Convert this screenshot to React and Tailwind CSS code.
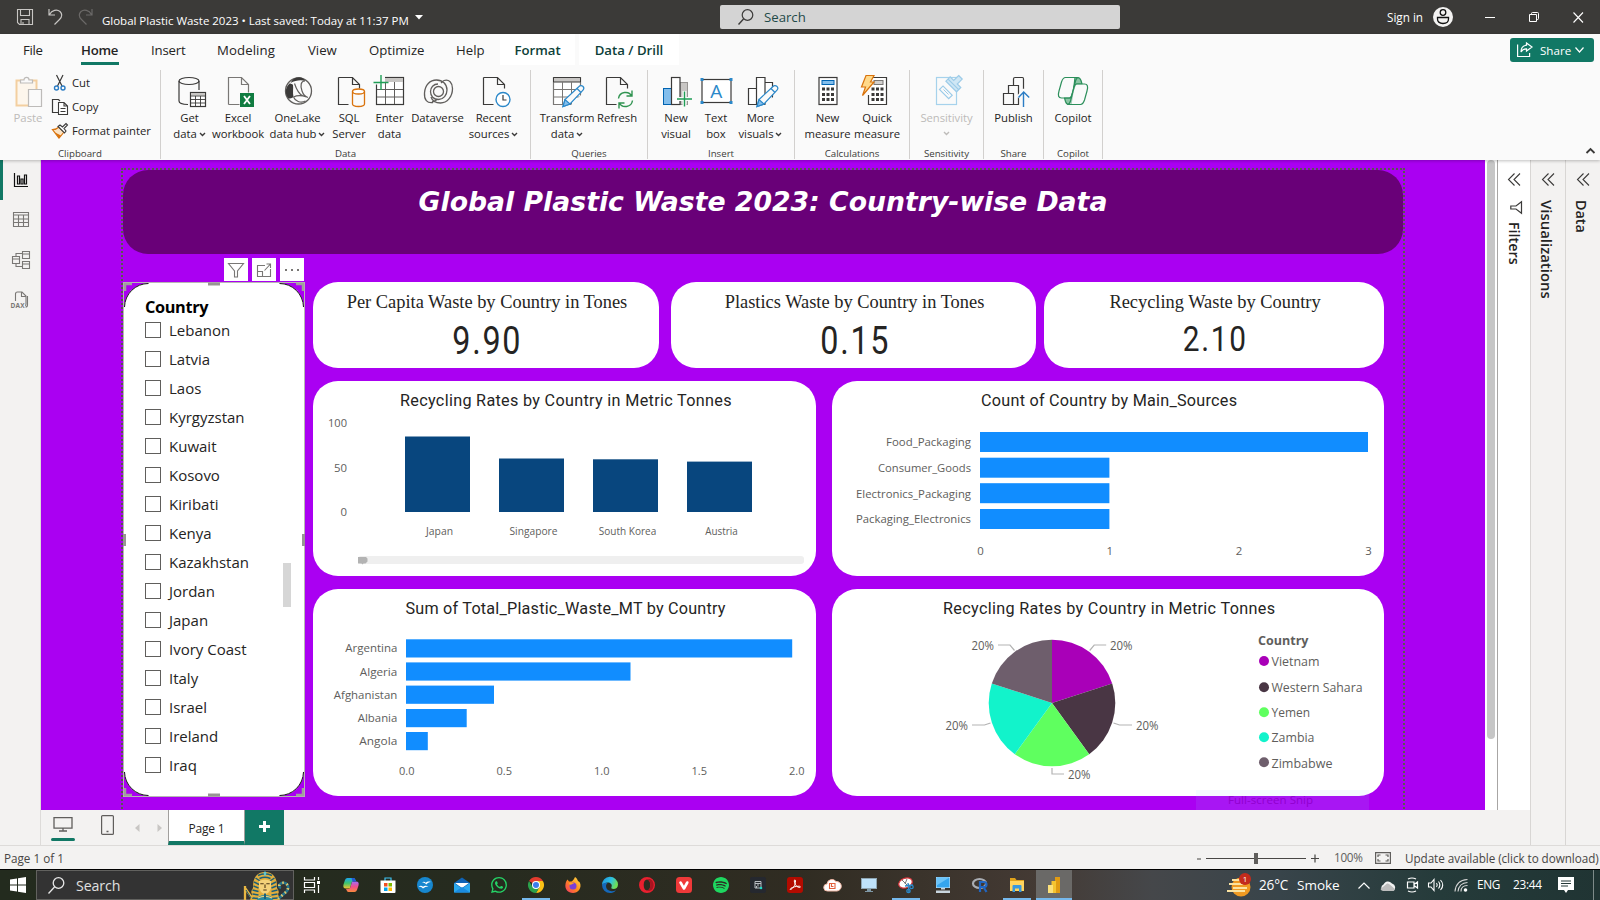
import React from "react";
import { SiWhatsapp, SiSpotify } from "react-icons/si";

const INK = "#3b3a39";

/* ---------- shared glyphs ---------- */

const Svg = ({ s = 32, w, h, children, className = "" }) => (
  <svg width={w || s} height={h || s} viewBox={`0 0 ${w || s} ${h || s}`} fill="none" className={`shrink-0 overflow-visible ${className}`}>
    {children}
  </svg>
);

const Doc = ({ x = 5.5, color = INK }) => (
  <path d={`M${x} 2.5h14l7 7v4M${x + 14} 2.5v7h7M${x} 2.5v27h10`} stroke={color} strokeWidth="1.2" />
);

const Pencil = () => (
  <g stroke="#2b88c9" strokeWidth="1.2">
    <path d="M12 31.5l2-7L28 11.5a2.6 2.6 0 0 1 4 3.6L19 29z" fill="#fafafa" />
    <path d="M12 31.5l2-7 5 4.5z" fill="#83beec" />
    <path d="M26 13.5l4 4" />
  </g>
);

const ribbonIcons = {
  get: (
    <Svg>
      <ellipse cx="15" cy="6" rx="10" ry="3.5" stroke={INK} strokeWidth="1.2" />
      <path d="M5 6v20c0 2 4 3.4 9 3.5M25 6v9" stroke={INK} strokeWidth="1.2" />
      <rect x="16.5" y="17.5" width="15" height="14" fill="#fff" stroke={INK} strokeWidth="1.2" />
      <rect x="17" y="18" width="14" height="2.5" fill="#c8c6c4" />
      <path d="M17 21h14M17 24.5h14M17 28h14M21.5 21v10M26.5 21v10" stroke={INK} strokeWidth="0.9" />
    </Svg>
  ),
  excel: (
    <Svg>
      <path d="M6.5 29.5V2.5h13l7 7v8M19.500 2.5v7h7M6.5 29.500h11" stroke="#797775" strokeWidth="1.2" />
      <rect x="18" y="18" width="14" height="14" fill="#107c41" />
      <path d="M22 21l6 8M28 21l-6 8" stroke="#fff" strokeWidth="1.8" />
    </Svg>
  ),
  onelake: (
    <Svg>
      <circle cx="16.500" cy="16" r="13" stroke="#605e5c" strokeWidth="1.3" fill="#fafafa" />
      <path d="M8.500 8C10.500 3.500 15 1.500 19 2.500c2 .6 3.500 2 4 3.500-4-1.500-10-.5-14.500 2z" fill={INK} />
      <path d="M7.500 8.500c1 0 3 .5 3.500 1.500.500 3-.5 8 .5 12-1.500 1-3.500 1.500-5 1.500C2.500 19 3 13 7.500 8.500z" fill={INK} />
      <path d="M11.500 22c4-2 9-1.500 13 0M12.500 8.500c2 6 4 10.500 8 12M23 6c-4 0-5 4-3 10 1 3 3 5.500 6 6.500M11.500 22c1.500 4 7 6.500 12 4" stroke="#605e5c" strokeWidth="1.200" />
    </Svg>
  ),
  sql: (
    <Svg>
      <Doc x={5.5} />
      <ellipse cx="25.500" cy="16.500" rx="6" ry="2.500" fill="#fff" stroke="#d9730d" strokeWidth="1.300" />
      <path d="M19.500 16.500v12.500c0 3.300 12 3.300 12 0V16.500" stroke="#d9730d" strokeWidth="1.300" />
    </Svg>
  ),
  enter: (
    <Svg>
      <rect x="2.500" y="2.500" width="27" height="27" stroke={INK} strokeWidth="1.200" fill="#fff" />
      <rect x="3" y="3" width="26" height="4" fill="#c8c6c4" />
      <path d="M3 14.500h26M3 22h26M11.500 7v22M20.500 7v22" stroke="#605e5c" strokeWidth="1" />
      <rect x="-1" y="-1" width="12" height="10.500" fill="#fafafa" />
      <path d="M7 0v15M-.5 7.500h15" stroke="#1f9d55" strokeWidth="1.400" />
    </Svg>
  ),
  dataverse: (
    <Svg>
      <g stroke="#605e5c" strokeWidth="1.300">
        <circle cx="16.500" cy="16.500" r="5" />
        <path d="M11 27.500C5 28.500 2 24.500 2.500 18 3 10 8 5 14.500 5c6 0 10.500 4 10.500 10 0 5-3.500 9.500-8.500 9.500-5 0-8-3.500-8-8 0-4 3-7.500 7.500-7.500" />
        <path d="M22 5.500c5-1.500 8.500 2 8.500 8C30.500 22 25 28 18.500 28c-4 0-8-1.500-9.500-6M10 27c2-.5 3.500-1 5-2.500M19 8c1-1 2-2 3-2.500" />
      </g>
    </Svg>
  ),
  recent: (
    <Svg>
      <Doc x={5.5} />
      <circle cx="25" cy="24.500" r="7" fill="#fff" stroke="#2b88c9" strokeWidth="1.400" />
      <path d="M25 20v5h3.500" stroke={INK} strokeWidth="1.200" />
    </Svg>
  ),
  transform: (
    <Svg>
      <path d="M2.500 2.500h27v27h-27z" stroke="#797775" strokeWidth="1.200" fill="#fff" />
      <path d="M2.500 2.500h27v4.500h-27z" fill="#c8c6c4" stroke={INK} />
      <path d="M3 14.500h26M3 22h26M11.500 7v22M20.500 7v22" stroke="#797775" />
      <path d="M19 31l12-12v13z" fill="#fafafa" />
      <Pencil />
    </Svg>
  ),
  refresh: (
    <Svg>
      <Doc x={5.5} />
      <g stroke="#2f9350" strokeWidth="1.400">
        <path d="M17.500 23.500c1-7 10.500-8 13-2.500M31 15.500V21h-5.500M31.500 25.500c-1 7-10.500 8-13 2.500M18 33.500V28h5.500" />
      </g>
    </Svg>
  ),
  newvisual: (
    <Svg>
      <rect x="3.500" y="13.500" width="8" height="16" fill="#83beec" stroke="#0063b1" />
      <rect x="20" y="7.500" width="7.500" height="22" fill="#c8c6c4" stroke="#979593" />
      <rect x="11.500" y="2.500" width="8.500" height="27" fill="#fff" stroke={INK} strokeWidth="1.200" />
      <path d="M24.500 16v15.500M17 24h15" stroke="#fafafa" strokeWidth="4" />
      <path d="M24.500 16.500v15M17 24h15" stroke="#1f9d55" strokeWidth="1.400" />
    </Svg>
  ),
  textbox: (
    <Svg>
      <rect x="2" y="4.500" width="29" height="23" fill="#fff" stroke={INK} strokeWidth="1.200" />
      <path d="M.5 3h3v3h-3zM29.500 3h3v3h-3zM.5 26h3v3h-3zM29.500 26h3v3h-3z" fill="#2b88c9" />
      <text x="16.300" y="22.500" textAnchor="middle" fontFamily="Open Sans" fontSize="19" fill="#2b88c9">A</text>
    </Svg>
  ),
  morevisuals: (
    <Svg>
      <path d="M3.500 13.500h8v16h-8zM11.500 2.500h8.500v27h-8.500zM20 7.500h7.500v22H20z" fill="#fff" stroke={INK} strokeWidth="1.200" />
      <path d="M19 31l12-12v13z" fill="#fafafa" />
      <Pencil />
    </Svg>
  ),
  measure: (
    <Svg>
      <rect x="7" y="2.500" width="18" height="27" fill="#fff" stroke={INK} strokeWidth="1.200" />
      <rect x="10" y="5.500" width="12" height="4" fill="#83beec" stroke="#0063b1" />
      {[12.5, 18, 23].map((y) => [10, 14.5, 19].map((x) => <rect key={`${x}-${y}`} x={x} y={y} width="3" height="3" fill={INK} />))}
    </Svg>
  ),
  quick: (
    <Svg>
      <path d="M12 2.500h13.500v27h-18V20" fill="#fff" stroke={INK} strokeWidth="1.200" />
      <rect x="13" y="5.500" width="9" height="4" fill="#d2d0ce" stroke="#797775" />
      {[12.5, 18, 23].map((y) => [10.5, 15, 19.5].map((x) => <rect key={`${x}-${y}`} x={x} y={y} width="3" height="3" fill={INK} />))}
      <path d="M5 .5h8L9.500 7H13L1.500 20.500l3-8.500H.5z" fill="#ffd98a" stroke="#d9730d" strokeWidth="1.200" />
    </Svg>
  ),
  sensitivity: (
    <Svg>
      <rect x="5.500" y="2.500" width="20" height="27" stroke="#a6d2ec" strokeWidth="1.200" />
      <g transform="rotate(45 22 9)" stroke="#9ccbe8" strokeWidth="1.200">
        <path d="M20-1h5v7h5v6h-15V6h5z" fill="#cfe7f5" />
        <path d="M15 9h15" />
      </g>
      <rect x="12" y="11" width="5" height="13" transform="rotate(-45 14.500 17)" fill="#fafafa" stroke="#9ccbe8" strokeWidth="1.200" />
      <path d="M12.500 14.500l5 5" stroke="#9ccbe8" />
    </Svg>
  ),
  publish: (
    <Svg>
      <path d="M5.500 29.500v-11h10v11zM10.500 18V10.500h10v19H15.500M15.500 10V4q0-1.500 1.500-1.500h7.500q1 0 1 1.500v10" stroke={INK} strokeWidth="1.200" />
      <path d="M20 22.500l5.500-6 6 6M25.500 17v15" stroke="#fafafa" strokeWidth="4" />
      <path d="M20.500 22.500l5.200-5.500 5.500 5.500M25.500 17.500V32" stroke="#2b7cc4" strokeWidth="1.400" />
    </Svg>
  ),
  copilot: (
    <Svg>
      <g stroke="#2c8f5b" strokeWidth="1.200" strokeLinejoin="round">
        <path d="M18 2.500h2.500q2.500 0 3.500 3l1 3.500h-5q-1.500 0-2.500 3l-1 3z" fill="#8cc5a5" />
        <path d="M14 29.500h-2q-2.500 0-3.500-3l-1-3.500h5q1.500 0 2.500-3l1-3z" fill="#8cc5a5" />
        <path d="M20 2.500H8.500Q6 2.500 4.500 7L2 16q-2 7 2.500 7h8q1.500 0 2.500-3.500L18.500 6q1-3.500 3-3.500" />
        <path d="M12 29.500h11.500q2.500 0 4-4.500L30 16q2-7-2.500-7h-8q-1.500 0-2.500 3.500L13.500 26q-1 3.500-3 3.500" fill="#fafafa" fillOpacity=".6" />
      </g>
    </Svg>
  ),
};

const Chev = ({ color = INK, className = "" }) => (
  <Svg w={7} h={5} className={className}>
    <path d="M1 1l2.500 2.500L6 1" stroke={color} strokeWidth="1.400" />
  </Svg>
);

/* ---------- title bar ---------- */

const TitleBar = () => (
  <header className="flex h-[34px] items-center bg-[#3b3a38] text-white">
    <Svg s={16} className="ml-[17px]">
      <path d="M.5.5h15v15h-13l-2-2zM3.500.5v6h9v-6M4 15.500v-5h8v5M6 13v2" stroke="#c8c6c4" strokeWidth="1.100" />
    </Svg>
    <Svg s={16} className="ml-[15px]">
      <path d="M1 0v6h6M1.500 5.500C4 1 9 0 12 2.500c3 3 1.500 6-.5 8L6.500 15.500" stroke="#c8c6c4" strokeWidth="1.200" />
    </Svg>
    <Svg s={16} className="ml-[14px]">
      <path d="M14 0v6H8M13.500 5.500C11 1 6 0 3 2.500c-3 3-1.500 6 .5 8l5 5" stroke="#6b6968" strokeWidth="1.200" />
    </Svg>
    <span className="ml-[8px] w-[306px] pt-[7px] text-[11.500px] font-medium tracking-[-0.02px] whitespace-nowrap">Global Plastic Waste 2023 • Last saved: Today at 11:37 PM</span>
    <Svg w={8} h={5} className="ml-[7px]">
      <path d="M0 0h8L4 4.500z" fill="#fff" />
    </Svg>
    <div className="ml-[297px] flex h-[24px] w-[400px] items-center rounded-[2px] bg-[#d4d4d4]">
      <Svg s={16} className="ml-[18px]">
        <circle cx="9.500" cy="6" r="5.300" stroke="#3b3a39" strokeWidth="1.200" />
        <path d="M5.500 10L.5 15.500" stroke="#3b3a39" strokeWidth="1.400" />
      </Svg>
      <span className="ml-[10px] pt-[1px] text-[13.200px] text-[#1f4a48]">Search</span>
    </div>
    <span className="ml-[267px] w-[36px] pt-[2px] text-[11.700px] font-medium whitespace-nowrap">Sign in</span>
    <Svg s={20} className="ml-[10px]">
      <circle cx="10" cy="10" r="10" fill="#f3f2f1" />
      <circle cx="10" cy="5.500" r="2.800" stroke="#111" strokeWidth="1.300" />
      <path d="M4.500 10.500h11v1.500c0 3-2.500 4.500-5.500 4.500S4.500 15 4.500 12z" stroke="#111" strokeWidth="1.300" />
    </Svg>
    <Svg s={10} className="ml-[32px]">
      <path d="M0 5.500h10" stroke="#fff" />
    </Svg>
    <Svg s={10} className="ml-[34px]">
      <path d="M.5 2.500h7v7h-7zM2.500 2.500v-1q0-1 1-1h5q1 0 1 1v5q0 1-1 1h-1" stroke="#fff" />
    </Svg>
    <Svg s={10} className="ml-[34px]">
      <path d="M.5.500l9.500 10M10 .5L.5 10.500" stroke="#fff" strokeWidth="1.100" />
    </Svg>
  </header>
);

/* ---------- ribbon ---------- */

const Tab = ({ children, className }) => (
  <span className={`flex h-[31px] items-center whitespace-nowrap text-[13.200px] text-[#252423] ${className}`}>{children}</span>
);

const TabRow = () => (
  <nav className="flex h-[31px]">
    <Tab className="ml-[23px] w-[58px] pt-[2px] tracking-[-0.3px]">File</Tab>
    <Tab className="mr-[32px] w-[38px] border-b-[3px] border-[#117865] pt-[5px] font-semibold tracking-[-0.250px]">Home</Tab>
    <Tab className="w-[66px] pt-[2px] tracking-[-0.150px]">Insert</Tab>
    <Tab className="w-[91px] pt-[2px] tracking-[0.1px]">Modeling</Tab>
    <Tab className="w-[61px] pt-[2px]">View</Tab>
    <Tab className="w-[87px] pt-[2px]">Optimize</Tab>
    <Tab className="w-[44px] pt-[2px]">Help</Tab>
    <Tab className="w-[75px] justify-center bg-white pt-[2px] font-semibold text-[#0d4038]!">Format</Tab>
    <Tab className="ml-[4px] w-[100px] justify-center bg-white pt-[2px] font-semibold text-[#0d4038]!">Data / Drill</Tab>
    <button className="mt-[4px] ml-[831px] flex h-[24px] w-[84px] items-center rounded-[3px] bg-[#117865] text-[11.600px] font-medium text-white">
      <Svg s={16} className="ml-[7px]">
        <path d="M.6 2.500v12h12v-3.500M9.500 1l5.500 4-5.500 4V6.800C6.500 6.800 5 8 4 10c0-4 2-6.500 5.500-6.800z" stroke="#fff" strokeWidth="1.200" />
      </Svg>
      <span className="ml-[7px] w-[31px] pt-[2px]">Share</span>
      <Svg w={9} h={6} className="ml-[4px]">
        <path d="M.5.5l4 4.500 4-4.500" stroke="#fff" strokeWidth="1.200" />
      </Svg>
    </button>
  </nav>
);

const Tool = ({ icon, lines, w, chev, dim }) => (
  <div className={`flex flex-col items-center text-[11.300px] leading-[16px] tracking-[-0.05px] whitespace-nowrap ${w} ${dim ? "text-[#bdbbb9]" : "text-[#252423]"}`}>
    {ribbonIcons[icon]}
    <span className="mt-[3px]">{lines[0]}</span>
    {(lines[1] || chev) && (
      <span className="-mt-[0.500px] flex items-center gap-[2px]">
        {lines[1] && <span>{lines[1]}</span>}
        {chev && <Chev color={dim ? "#bdbbb9" : INK} className={lines[1] ? "mt-[2px]" : "mt-[5px]"} />}
      </span>
    )}
  </div>
);

const Group = ({ label, w, children }) => (
  <section className={`flex h-[89px] flex-col justify-between border-r border-[#d2d0ce] ${w}`}>
    <div className="flex pt-[5px]">{children}</div>
    <div className="-mb-[2px] text-center text-[9.700px] leading-[14px] text-[#3b3a39]">{label}</div>
  </section>
);

const Ribbon = () => (
  <div className="relative z-10 h-[126px] bg-[#fafafa] shadow-[0_1px_3px_rgba(0,0,0,0.25)]">
    <TabRow />
    <div className="flex pt-[5px]">
      <Group label="Clipboard" w="w-[161px]">
        <div className="flex w-[50px] flex-col items-center pl-[6px] text-[11.400px] leading-[16px] text-[#bdbbb9]">
          <Svg className="ml-[2px]">
            <path d="M3.500 5.500h20v25h-20z" stroke="#f3cfa0" strokeWidth="2" fill="#fdf6ec" />
            <path d="M7.500 8V5h3.500c0-3.500 5-3.500 5 0h3.500v3z" fill="#fafafa" stroke="#bdbbb9" strokeWidth="1.200" />
            <path d="M15.500 14.500h13v17h-13z" fill="#fafafa" stroke="#bdbbb9" strokeWidth="1.200" />
          </Svg>
          <span className="mt-[3px]">Paste</span>
        </div>
        <div className="flex flex-col gap-[8px] text-[11.300px] leading-[16px] text-[#252423]">
          <div className="flex h-[16px] items-center gap-[5px]">
            <Svg s={16} className="ml-[2px]">
              <path d="M4.500 0l5.500 11M11 0L5.500 11" stroke={INK} strokeWidth="1.200" />
              <circle cx="4.500" cy="13" r="2" stroke="#2b7cc4" strokeWidth="1.400" />
              <circle cx="11" cy="13" r="2" stroke="#2b7cc4" strokeWidth="1.400" />
            </Svg>
            <span className="-ml-[1px]">Cut</span>
          </div>
          <div className="flex h-[16px] items-center gap-[4px]">
            <Svg s={16} className="ml-[2px]">
              <path d="M6 13.500H.5V.5h6l1.500 1.500" stroke={INK} strokeWidth="1.200" />
              <path d="M6.500 3.500h5.500l3.500 3.500v8.500h-9zM12 3.500V7h3.500M8.500 9.500h5M8.500 12.500h5" fill="#fff" stroke={INK} strokeWidth="1.100" />
            </Svg>
            <span>Copy</span>
          </div>
          <div className="flex h-[16px] items-center gap-[4px]">
            <Svg s={16} className="ml-[2px]">
              <path d="M.5 6.500c3 0 5-1 6.500-2.500L12 9c-1.500 2-3 4-5 6z" fill="#fbe3c4" stroke="#d9730d" strokeWidth="1.200" />
              <path d="M3 9.500l6 3-2 2.500z" fill="#d9730d" />
              <path d="M6 3.500l2-1.500 2.500 2L14 .5l1.500 1.500L12 5.500l2 2.500-1.500 2z" fill="#fff" stroke={INK} strokeWidth="1.100" />
            </Svg>
            <span className="whitespace-nowrap">Format painter</span>
          </div>
        </div>
      </Group>
      <Group label="Data" w="w-[370px]">
        <div className="w-[5px]" />
        <Tool icon="get" lines={["Get", "data"]} chev w="w-[47px]" />
        <Tool icon="excel" lines={["Excel", "workbook"]} w="w-[50px]" />
        <Tool icon="onelake" lines={["OneLake", "data hub"]} chev w="w-[69px]" />
        <Tool icon="sql" lines={["SQL", "Server"]} w="w-[34px]" />
        <Tool icon="enter" lines={["Enter", "data"]} w="w-[47px]" />
        <Tool icon="dataverse" lines={["Dataverse"]} w="w-[49px]" />
        <Tool icon="recent" lines={["Recent", "sources"]} chev w="w-[63px]" />
      </Group>
      <Group label="Queries" w="w-[117px]">
        <div className="w-[9px]" />
        <Tool icon="transform" lines={["Transform", "data"]} chev w="w-[54px]" />
        <Tool icon="refresh" lines={["Refresh"]} w="w-[46px]" />
      </Group>
      <Group label="Insert" w="w-[147px]">
        <div className="w-[8px]" />
        <Tool icon="newvisual" lines={["New", "visual"]} w="w-[40px]" />
        <Tool icon="textbox" lines={["Text", "box"]} w="w-[40px]" />
        <Tool icon="morevisuals" lines={["More", "visuals"]} chev w="w-[49px]" />
      </Group>
      <Group label="Calculations" w="w-[115px]">
        <div className="w-[8px]" />
        <Tool icon="measure" lines={["New", "measure"]} w="w-[49px]" />
        <Tool icon="quick" lines={["Quick", "measure"]} w="w-[50px]" />
      </Group>
      <Group label="Sensitivity" w="w-[74px]">
        <Tool icon="sensitivity" lines={["Sensitivity"]} chev dim w="w-[73px]" />
      </Group>
      <Group label="Share" w="w-[60px]">
        <Tool icon="publish" lines={["Publish"]} w="w-[59px]" />
      </Group>
      <Group label="Copilot" w="w-[59px]">
        <Tool icon="copilot" lines={["Copilot"]} w="w-[58px]" />
      </Group>
      <Svg w={9} h={5} className="mt-[78px] ml-[483px]">
        <path d="M.5 5l4-4 4 4" stroke={INK} strokeWidth="1.800" />
      </Svg>
    </div>
  </div>
);

/* ---------- left navigation ---------- */

const LeftNav = () => (
  <nav className="flex h-[685px] w-[41px] flex-col border-r border-[#dddbd9] bg-[#f3f2f1]">
    <div className="flex h-[40px] w-[41px] items-center border-l-[3px] border-[#117865] pl-[11px]">
      <Svg s={14}>
        <path d="M.5 0v13.500H14M3.500 3h2v8h-2zM7 6h2v5H7zM10.500 2h2v9h-2z" stroke="#111" strokeWidth="1.200" />
      </Svg>
    </div>
    <Svg w={16} h={15} className="mt-[12px] ml-[13px]">
      <path d="M.5.5h15v14H.5zM.5 3h15M.500 7h15M.5 10.500h15M5.500 3v11.500M10.500 3v11.500" stroke="#797775" strokeWidth="1.100" />
    </Svg>
    <Svg s={18} className="mt-[24px] ml-[12px]">
      <path d="M.5 5.500h7v7h-7zM.5 8h7M10.500.5h7v7h-7zM10.500 3h7M10.500 10.500h7v7h-7zM10.500 13h7M4 5.500V2.500h6.500M4 12.500v3h6.500" stroke="#797775" strokeWidth="1.100" />
    </Svg>
    <Svg w={18} h={18} className="mt-[22px] ml-[11px]">
      <path d="M4.500 10V3q0-2 2-2H11l4 4v8q0 1.500-1 1.500M10.500 1v4.500H15M16.500 5v9q0 2-2 2" stroke="#797775" strokeWidth="1.100" />
      <text x="-.5" y="16.500" fontFamily="Open Sans" fontWeight="700" fontSize="6.500" fill="#797775" textLength="14">DAX</text>
    </Svg>
  </nav>
);

/* ---------- report visuals ---------- */

const Label = ({ x, y, w, anchor = "start", size = 11.4, fill = "#605e5c", weight = 400, font = "Open Sans, sans-serif", children }) => (
  <text x={x} y={y} fontSize={size} fill={fill} fontWeight={weight} fontFamily={font} textAnchor={anchor} textLength={w} lengthAdjust="spacingAndGlyphs">
    {children}
  </text>
);

/* Titles spread their letters with spacing only, which keeps the narrow glyphs. */
const ChartTitle = ({ x, y, w, children }) => (
  <text x={x} y={y} textLength={w} lengthAdjust="spacing" fontSize="16.2" fill="#252423" fontFamily="Roboto, sans-serif">{children}</text>
);

/* Each chart keeps the report page's own coordinates through its viewBox. */
const Chart = ({ x, y, w, h, children }) => (
  <svg width={w} height={h} viewBox={`${x} ${y} ${w} ${h}`} className="block shrink-0 rounded-[25px] bg-white">
    {children}
  </svg>
);

const columns = [
  { n: "Japan", x: 405, top: 436.5, lw: 27 },
  { n: "Singapore", x: 499, top: 458.5, lw: 48 },
  { n: "South Korea", x: 593, top: 459.3, lw: 57.5 },
  { n: "Austria", x: 687, top: 461.6, lw: 32.5 },
];

const RecyclingColumns = () => (
  <Chart x={313} y={381} w={503} h={195}>
    <ChartTitle x={400} y={406} w={331.5}>Recycling Rates by Country in Metric Tonnes</ChartTitle>
    <Label x={347} y={426.5} anchor="end" w={19}>100</Label>
    <Label x={347} y={471.5} anchor="end" w={13}>50</Label>
    <Label x={347} y={515.5} anchor="end" w={6.5}>0</Label>
    {columns.map((c) => (
      <g key={c.n}>
        <rect x={c.x} y={c.top} width="65" height={512 - c.top} fill="#08467e" />
        <Label x={c.x + 34.5} y={535} anchor="middle" w={c.lw} size={10.8}>{c.n}</Label>
      </g>
    ))}
    <rect x="358" y="556" width="446" height="8" rx="3" fill="#efefef" />
    <path d="M358 557h8l1.500 1.500v3l-2 2h-2l-1 1-1-1h-3.500z" fill="#b3b3b3" />
  </Chart>
);

const sources = [
  ["Food_Packaging", 432, 1368, 446.3, 85],
  ["Consumer_Goods", 457.7, 1109.4, 472, 93],
  ["Electronics_Packaging", 483.2, 1109.4, 498, 115],
  ["Packaging_Electronics", 509, 1109.4, 523.3, 115],
];

const MainSources = () => (
  <Chart x={832} y={381} w={552} h={195}>
    <ChartTitle x={981} y={406} w={256}>Count of Country by Main_Sources</ChartTitle>
    {sources.map(([n, y, end, base, lw]) => (
      <g key={n}>
        <Label x={971} y={base} anchor="end" w={lw} size={11.6}>{n}</Label>
        <rect x="980" y={y} width={end - 980} height="20" fill="#118dff" />
      </g>
    ))}
    {[0, 1, 2, 3].map((v) => (
      <Label key={v} x={980.5 + v * 129.3} y={555} anchor="middle">{v}</Label>
    ))}
  </Chart>
);

const totals = [
  ["Argentina", 639.3, 792.2, 652, 52],
  ["Algeria", 662.4, 630.5, 676, 37.5],
  ["Afghanistan", 685.6, 494, 699, 63.5],
  ["Albania", 709, 466.7, 722, 39.5],
  ["Angola", 732, 427.8, 745, 38],
];

const TotalWaste = () => (
  <Chart x={313} y={589} w={503} h={207}>
    <ChartTitle x={405.5} y={614} w={320}>Sum of Total_Plastic_Waste_MT by Country</ChartTitle>
    {totals.map(([n, y, end, base, lw]) => (
      <g key={n}>
        <Label x={397.3} y={base} anchor="end" w={lw} size={11.6}>{n}</Label>
        <rect x="406" y={y} width={end - 406} height="18.200" fill="#118dff" />
      </g>
    ))}
    {["0.0", "0.5", "1.0", "1.5", "2.0"].map((v, i) => (
      <Label key={v} x={406.7 + i * 97.5} y={774.5} anchor="middle" w={15.5}>{v}</Label>
    ))}
  </Chart>
);

const slices = [
  ["Vietnam", "#a900b8", 48, 661, 666],
  ["Western Sahara", "#493644", 91, 687.3, 692],
  ["Yemen", "#5fff5f", 38.5, 712.3, 717],
  ["Zambia", "#12f3cb", 43, 737.3, 742],
  ["Zimbabwe", "#6e5e6c", 61, 762.3, 768],
];

const slicePath = (i) => {
  const pt = (k) => {
    const a = (k * 72 * Math.PI) / 180;
    return `${(1052 + 63.3 * Math.sin(a)).toFixed(2)} ${(703 - 63.3 * Math.cos(a)).toFixed(2)}`;
  };
  return `M1052 703L${pt(i)}A63.3 63.3 0 0 1 ${pt(i + 1)}Z`;
};

const RecyclingPie = () => (
  <Chart x={832} y={589} w={552} h={207}>
    <ChartTitle x={943} y={614} w={332}>Recycling Rates by Country in Metric Tonnes</ChartTitle>
    {slices.map(([n, c], i) => (
      <path key={n} d={slicePath(i)} fill={c} />
    ))}
    <path
      d="M1089.700 650.500l4.500-5.500h12M1113.500 723l6 2h12.500M1052 768v6h12M990.500 723l-6 2H972M1014.500 650.500l-4.500-5.500h-12"
      fill="none"
      stroke="#b3b3b3"
      strokeWidth="1.200"
    />
    {[[1110, 650], [1136, 730], [1068, 779], [945.5, 730], [971.5, 650]].map(([x, y]) => (
      <Label key={`${x}`} x={x} y={y} w={22.5} size={11.8}>20%</Label>
    ))}
    <Label x={1258} y={645} w={50.5} size={12.8} weight={700}>Country</Label>
    {slices.map(([n, c, lw, cy, base]) => (
      <g key={n}>
        <circle cx="1264" cy={cy} r="5" fill={c} />
        <Label x={1271.5} y={base} w={lw} size={13}>{n}</Label>
      </g>
    ))}
  </Chart>
);

const Kpi = ({ title, value, w, valueCls }) => (
  <div className={`flex h-[86px] shrink-0 flex-col items-center rounded-[25px] bg-white text-[#252423] ${w}`}>
    <div className="mt-[8px] pl-[2px] font-[Liberation_Serif,serif] text-[18.400px] leading-[24px] whitespace-nowrap">{title}</div>
    <div className={`scale-x-[0.84] font-[Roboto,sans-serif] leading-[44px] ${valueCls}`}>{value}</div>
  </div>
);

const countries = ["Lebanon", "Latvia", "Laos", "Kyrgyzstan", "Kuwait", "Kosovo", "Kiribati", "Kenya", "Kazakhstan", "Jordan", "Japan", "Ivory Coast", "Italy", "Israel", "Ireland", "Iraq"];

const Slicer = () => (
  <div className="relative h-[515px] w-[182px] shrink-0 border border-[#b8b6b4]">
    <div className="h-full rounded-[25px] bg-white pt-[14px] pl-[21px]">
      <div className="h-[24px] text-[16.300px] leading-[20px] font-bold tracking-[-0.350px] text-black">Country</div>
      <div className="flex flex-col">
        {countries.map((c) => (
          <label key={c} className="flex h-[29px] items-start">
            <span className="mt-[1px] h-[16px] w-[16px] border border-[#605e5c] bg-white" />
            <span className="ml-[8px] text-[15px] leading-[18px] text-[#252423]">{c}</span>
          </label>
        ))}
      </div>
    </div>
    {/* rounded outline and resize handles over the frame */}
    <svg width="182" height="515" viewBox="0 0 182 515" fill="none" className="pointer-events-none absolute -top-px -left-px">
      <path d="M1.500 25A24 24 0 0 1 25.500 1.500M156.500 1.500A24 24 0 0 1 180.500 25M1.500 490A24 24 0 0 0 25.500 513.500M156.500 513.500A24 24 0 0 0 180.500 490" stroke="#111" />
      <path d="M2 9V2h7M173 2h7v7M2 506v7h7M173 513h7v-7" stroke="#a19f9d" strokeWidth="2.500" />
      <path d="M85 2h12M85 513h12M1.500 252v12M180.500 252v12" stroke="#979593" strokeWidth="3" />
      <rect x="160" y="281" width="8" height="44" fill="#d6d6d6" />
    </svg>
  </div>
);

const VisualToolbar = () => (
  <div className="flex h-[28px] gap-[4px] pt-[4px] pl-[101px]">
    <div className="flex h-[23px] w-[24px] items-center justify-center bg-white">
      <Svg s={16}><path d="M.5 1.500h15L9.500 9v6h-3V9z" stroke="#797775" strokeWidth="1.100" /></Svg>
    </div>
    <div className="flex h-[23px] w-[24px] items-center justify-center bg-white">
      <Svg s={16}><path d="M9 3.500H1.500v11h13V7M1.500 9.500h5v5M8.500 8.500l6-6.500M10.500 2h4v4" stroke="#797775" strokeWidth="1.100" /></Svg>
    </div>
    <div className="flex h-[23px] w-[24px] items-center justify-center bg-white">
      <Svg s={16}><path d="M1 7h2v2H1zM7 7h2v2H7zM13 7h2v2h-2z" fill="#797775" /></Svg>
    </div>
  </div>
);

const ReportCanvas = () => (
  <div className="relative h-[650px] w-[1444px] shrink-0 overflow-hidden bg-[#aa00f2] pt-[8px] pl-[80px]">
    <div className="h-[720px] w-[1284px] border-2 border-dotted border-[#585a4e]">
      <div className="flex h-[84px] justify-center rounded-[25px] bg-[#690078] pt-[16px]">
        <h1 className="font-[DejaVu_Sans,sans-serif] text-[26.700px] leading-[32px] font-bold whitespace-nowrap text-white italic">Global Plastic Waste 2023: Country-wise Data</h1>
      </div>
      <VisualToolbar />
      <div className="flex gap-[8px]">
        <Slicer />
        <div className="flex flex-col gap-[13px]">
          <div className="flex">
            <Kpi title="Per Capita Waste by Country in Tones" value="9.90" w="w-[346px]" valueCls="mt-[5px] text-[38.500px] tracking-[2px] pl-[4px]" />
            <div className="w-[12px]" />
            <Kpi title="Plastics Waste by Country in Tones" value="0.15" w="w-[365px]" valueCls="mt-[5px] text-[38.500px] tracking-[2px] pl-[4px]" />
            <div className="w-[8px]" />
            <Kpi title="Recycling Waste by Country" value="2.10" w="w-[340px]" valueCls="mt-[3px] text-[35.500px] tracking-[2px] pl-[4px]" />
          </div>
          <div className="flex gap-[16px]"><RecyclingColumns /><MainSources /></div>
          <div className="flex gap-[16px]"><TotalWaste /><RecyclingPie /></div>
        </div>
      </div>
    </div>
    <div className="absolute right-[116px] bottom-0 h-[20px] w-[173px] bg-[#a0d8ff]/10 pt-[2px] pl-[32px] text-[11.600px] leading-[16px] whitespace-nowrap text-[#9100cf]">Full-screen Snip</div>
  </div>
);

const Collapse = () => (
  <Svg w={13} h={13}>
    <path d="M6.500.5l-6 6 6 6M12 .5l-6 6 6 6" stroke={INK} strokeWidth="1.100" />
  </Svg>
);

const PageTabs = () => (
  <div className="flex h-[35px] bg-[#f3f2f1]">
    <div className="ml-[10px] flex w-[24px] flex-col items-center">
      <Svg w={20} h={15} className="mt-[7px] -ml-[1px]">
        <path d="M1 .6h18v10.500H1zM10 11v3M6 14h8" stroke="#605e5c" strokeWidth="1.300" />
      </Svg>
      <div className="mt-[6px] h-[3px] w-[24px] rounded bg-[#117865]" />
    </div>
    <Svg w={13} h={20} className="mt-[5px] ml-[26px]">
      <rect x=".6" y=".6" width="11.800" height="18.800" rx="1" stroke="#605e5c" strokeWidth="1.200" />
      <path d="M5.500 16.500h2" stroke="#605e5c" strokeWidth="1.500" />
    </Svg>
    <Svg w={5} h={8} className="mt-[14px] ml-[21px]"><path d="M4.500 0v8L0 4z" fill="#c8c6c4" /></Svg>
    <Svg w={5} h={8} className="mt-[14px] ml-[17px]"><path d="M.5 0v8L5 4z" fill="#c8c6c4" /></Svg>
    <div className="ml-[6px] w-[77px] border-x border-b-[4px] border-x-[#a19f9d] border-b-[#117865] bg-white pt-[10px] text-center text-[12px] leading-[18px] font-medium tracking-[-0.2px] text-[#252423]">Page 1</div>
    <div className="flex w-[39px] items-center justify-center bg-[#117865]">
      <Svg s={11} className="-mt-[2px]"><path d="M5.500 0v11M0 5.500h11" stroke="#fff" strokeWidth="3" /></Svg>
    </div>
  </div>
);

const SidePanes = () => (
  <>
    <div className="flex w-[35px] flex-col items-center border-l border-[#d8d6d4] bg-[#f3f2f1] pt-[13px]">
      <Collapse />
      <span className="mt-[14px] mr-[2px] text-[14.800px] leading-[18px] font-semibold tracking-[0.050px] text-[#252423] [writing-mode:vertical-rl]">Visualizations</span>
    </div>
    <div className="flex w-[35px] flex-col items-center border-l border-[#d8d6d4] bg-[#f3f2f1] pt-[13px]">
      <Collapse />
      <span className="mt-[14px] mr-[4px] text-[14.300px] leading-[18px] font-semibold text-[#252423] [writing-mode:vertical-rl]">Data</span>
    </div>
  </>
);

/* ---------- status bar ---------- */

const StatusBar = () => (
  <div className="flex h-[24px] items-center border-t border-[#dddbd9] bg-[#f3f2f1] text-[11.700px] whitespace-nowrap text-[#484644]">
    <span className="ml-[4px] w-[1192px] pt-[3px]">Page 1 of 1</span>
    <Svg w={124} h={12}>
      <path d="M1 7h4M10 6.500h100M115 6.500h8M119 2.500v8" stroke="#484644" strokeWidth="1.200" />
      <rect x="58" y="1" width="4" height="11" fill="#605e5c" />
    </Svg>
    <span className="ml-[14px] w-[41px] tracking-[-0.3px] text-[#605e5c]">100%</span>
    <Svg w={16} h={12} className="mt-[1px]">
      <path d="M.6.6h14.800v10.800H.6z" stroke="#605e5c" strokeWidth="1.200" />
      <path d="M3 5V3h2.500M10.500 3H13v2M13 7v2h-2.500M5.500 9H3V7" stroke="#605e5c" strokeWidth="1.200" />
    </Svg>
    <span className="ml-[14px] pt-[3px] tracking-[-0.050px]">Update available (click to download)</span>
  </div>
);

/* ---------- taskbar ---------- */

const Slot = ({ children, open, active }) => (
  <div className="flex h-[30px] w-[37px] justify-center">
    <div className={`flex h-[30px] flex-col items-center ${active ? "w-[36px] bg-[#6a6967]" : "w-[28px]"}`}>
      <div className="flex h-[28px] items-center pt-[2px]">{children}</div>
      {(open || active) && <div className="h-[2px] w-full bg-[#76b9ed]" />}
    </div>
  </div>
);

const Pharaoh = () => (
  <Svg w={48} h={29}>
    <path d="M7 29l2-6q-2-2 1-6 0-9 3-12Q16 1 22 1t9 4q3 3 3 12 3 4 1 6l2 6z" fill="#e2ae3c" />
    <path d="M12.500 7l4.500 3M11 11l5 2.500M10.500 15l5 2M9.500 19l6 1.500M9.500 23l6 1M9 27l7 .5M31.500 7L27 10M33 11l-5 2.500M33.500 15l-5 2M34.500 19l-6 1.500M34.500 23l-6 1M35 27l-7 .5M15 4.500q7-3.500 14 0M16.500 7.500q5.500-2.500 11 0" stroke="#1c5f78" strokeWidth="1.500" />
    <path d="M16 10q6-3 12 0v7q-1.500 5.500-6 6-4.500-.5-6-6z" fill="#f4d27a" />
    <path d="M17.300 12.800h3.400M23.300 12.800h3.400M20.300 19h3.400M22 13.500v3.500" stroke="#4a3414" strokeWidth="1.100" />
    <path d="M14 29q1-5 8-5t8 5z" fill="#2b8ba0" />
    <path d="M15 27q7-3.500 14 0" stroke="#f4d27a" strokeWidth="1.200" />
    <path d="M21 22.500h2V28h-2z" fill="#1c5f78" />
    <path d="M22 0l1.500 2-1 3h-1l-1-3z" fill="#5cc3d2" />
    <path d="M2 15v14M2 17l7 10" stroke="#e8b743" strokeWidth="2.300" />
    <path d="M3 19l5 8" stroke="#1c5f78" strokeWidth="1" />
    <path d="M35 28l8-7c5-5 0-12-6-8q-2 3 1 4" stroke="#25748c" strokeWidth="2.600" />
    <path d="M35 28l8-7c5-5 0-12-6-8q-2 3 1 4" stroke="#e8c766" strokeWidth="2.600" strokeDasharray="1.500 3" />
  </Svg>
);

const CopilotLogo = () => (
  <Svg s={16}>
    <defs>
      <linearGradient id="cpA" x1="0" y1="0" x2="0" y2="1"><stop stopColor="#1ba7f0" /><stop offset=".5" stopColor="#3fc46a" /><stop offset="1" stopColor="#f7c331" /></linearGradient>
      <linearGradient id="cpB" x1="0" y1="0" x2="0" y2="1"><stop stopColor="#a46bf5" /><stop offset=".5" stopColor="#f04f8b" /><stop offset="1" stopColor="#f98b3c" /></linearGradient>
    </defs>
    <path d="M4.500 1h6q1.500 0 2 2L13 4h-2.500q-1.500 0-2 2L7 11.500H3Q-.5 11.500.5 7.500L2 3q.7-2 2.500-2z" fill="url(#cpA)" />
    <path d="M11.500 15h-6q-1.500 0-2-2L3 12h2.500q1.500 0 2-2L9 4.500h4q3.500 0 2.500 4L14 13q-.7 2-2.500 2z" fill="url(#cpB)" />
    <path d="M8.500 1h2q1.500 0 2 2l.5 1.500H9.500z" fill="#2459d6" />
  </Svg>
);

const ChromeLogo = () => (
  <Svg s={16}>
    <path d="M8 8L1.070 4A8 8 0 0 1 14.930 4H8z" fill="#e33b2e" />
    <path d="M8 8l6.930-4A8 8 0 0 1 8 16l3.500-6z" fill="#fbc116" />
    <path d="M8 8v8A8 8 0 0 1 1.070 4l3.500 6z" fill="#2ba24c" />
    <path d="M8 4h6.930L11.500 10z" fill="#fbc116" />
    <path d="M8 16l3.500-6H8z" fill="#2ba24c" />
    <circle cx="8" cy="8" r="4" fill="#fff" />
    <circle cx="8" cy="8" r="3" fill="#3b7ded" />
  </Svg>
);

const FirefoxLogo = () => (
  <Svg s={16}>
    <defs>
      <linearGradient id="ffx" x1="1" y1="0" x2="0" y2="1"><stop stopColor="#ffe14a" /><stop offset=".5" stopColor="#ff8a1d" /><stop offset="1" stopColor="#f5316b" /></linearGradient>
    </defs>
    <path d="M10 0c1.500 1 2.500 2.500 3 4 1 .5 1.500 1 2 2 2 5-2 10-7 10S-.5 12 .5 7C.8 5 1.500 4 2.500 2.500L4 4.500h2.500C8 3.500 9 2 10 0z" fill="url(#ffx)" />
    <circle cx="8" cy="9" r="3.500" fill="#7a3fd6" />
    <path d="M4 6c2-1 4-.5 5 .5-1.500 0-2 1-3.500 1.200C4.500 8 4 7 4 6z" fill="#ffa51f" />
  </Svg>
);

const EdgeLogo = () => (
  <Svg s={16}>
    <defs>
      <linearGradient id="edg" x1="0" y1="0" x2="1" y2=".4"><stop stopColor="#1a8fe0" /><stop offset=".6" stopColor="#2fc2df" /><stop offset="1" stopColor="#6ede54" /></linearGradient>
    </defs>
    <path d="M0 8a8 8 0 0 1 16-.5c0 3-2 4.500-4.500 4.500-2 0-2.500-1-2-2C10.500 8 9 5.500 6 5.500 3 5.500 1 7 0 8z" fill="url(#edg)" />
    <path d="M0 8c1-1.500 3-2.500 5.500-2-2 1.500-2 5 .5 7 2 1.500 5 1.500 8 .2C12 15.500 10 16 8 16a8 8 0 0 1-8-8z" fill="#1668b8" />
  </Svg>
);

const Taskbar = () => (
  <footer className="flex h-[31px] border-t border-black bg-[linear-gradient(90deg,#232b1e_0%,#262b1f_30%,#302c22_50%,#443a34_65%,#45474a_72%,#38444a_80%,#253b3a_90%,#203433_100%)] text-white">
    <Svg s={16} className="mt-[7px] ml-[10px]">
      <path d="M0 2.500l7-1v6H0zM8 1.300L16 0v7.500H8zM0 8.500h7v6l-7-1zM8 8.500h8V16l-8-1.300z" fill="#fff" />
    </Svg>
    <div className="ml-[10px] flex h-[30px] w-[258px] items-center border border-[#62625f] bg-[#333] pl-[11px]">
      <Svg s={17}>
        <circle cx="10.500" cy="6" r="5.300" stroke="#e8e8e8" strokeWidth="1.300" />
        <path d="M6.500 10L.5 16.500" stroke="#e8e8e8" strokeWidth="1.300" />
      </Svg>
      <span className="ml-[11px] w-[124px] pt-[1px] text-[14.200px] tracking-[-0.1px] text-[#e0e0e0]">Search</span>
      <div className="ml-[43px] h-[29px] w-[48px]"><Pharaoh /></div>
    </div>
    <div className="-ml-[1px] flex h-[30px]">
      <Slot>
        <Svg s={16}><path d="M.5 0v3h10V0M.5 16v-3h10v3M.5 5.500h10v5H.5zM14.500 0v3M14.500 8v8" stroke="#fff" strokeWidth="1.200" /><path d="M13 4h3v3h-3z" fill="#fff" /></Svg>
      </Slot>
      <div className="w-[2px]" />
      <Slot><CopilotLogo /></Slot>
      <Slot>
        <Svg s={16}><path d="M5 4V1h6v3" stroke="#3fc1f0" strokeWidth="1.200" /><path d="M.5 3.500h15V15q0 1-1 1h-13q-1 0-1-1z" fill="#fff" /><path d="M4 6h3.500v3.500H4z" fill="#f25022" /><path d="M8.500 6H12v3.500H8.500z" fill="#7fba00" /><path d="M4 10.500h3.500V14H4z" fill="#00a4ef" /><path d="M8.500 10.500H12V14H8.500z" fill="#ffb900" /></Svg>
      </Slot>
      <Slot>
        <Svg s={16}><circle cx="8" cy="8" r="8" fill="#1787cf" /><path d="M5 5.500c1.500-1 2.800-.8 3.700.2C10 4.500 11.500 4.200 14 5c-2.200.2-3.500 1-4.700 2.500C8 6 6.800 5.500 5 5.500zM1.500 9.500c2-1.200 3.500-.8 4.500.2C7.500 8.700 9 8.500 11.500 9.500c-2.500.2-4 .8-5.500 2C5 10.200 3.500 9.500 1.500 9.500z" fill="#fff" /></Svg>
      </Slot>
      <Slot>
        <Svg s={16}><path d="M0 6l8-5.500L16 6v9H0z" fill="#0f62b5" /><path d="M1 6h14l-7 5z" fill="#fff" /><path d="M0 6l8 5.500L16 6v9.500H0z" fill="#2aa8ee" /><path d="M0 15.500L8 10l8 5.500z" fill="#1a8be0" /></Svg>
      </Slot>
      <Slot><SiWhatsapp size={16} color="#25d366" /></Slot>
      <Slot open><ChromeLogo /></Slot>
      <Slot><FirefoxLogo /></Slot>
      <Slot><EdgeLogo /></Slot>
      <Slot>
        <Svg s={16}><path fillRule="evenodd" d="M8 0a8 8 0 1 0 0 16A8 8 0 0 0 8 0zM8 2.500c2 0 3.300 2.300 3.300 5.500S10 13.500 8 13.500 4.700 11.200 4.700 8 6 2.500 8 2.500z" fill="#e8202f" /><path d="M8 2.500c2-1 4-.5 5.300 1.300 2.200 3 1.500 7-.5 9C11.500 14 9.800 14.300 8 13.500c2 0 3.300-2.300 3.300-5.500S10 2.500 8 2.500z" fill="#a81420" /></Svg>
      </Slot>
      <Slot>
        <Svg s={16}><rect width="16" height="16" rx="3.500" fill="#ef3939" /><path d="M4.500 5.500L8 11.500l3.300-6" stroke="#fff" strokeWidth="2.600" strokeLinecap="round" strokeLinejoin="round" /></Svg>
      </Slot>
      <Slot><SiSpotify size={16} color="#1ed760" /></Slot>
      <Slot>
        <Svg s={16}><rect width="16" height="16" rx="2" fill="#25282f" /><path d="M5 4.500h6v6.500H5zM5 6.500h6M8 6.500v3M6.500 9v2" stroke="#b8bcc2" strokeWidth="1" /><circle cx="11" cy="11" r="1.300" fill="#21d7c4" /></Svg>
      </Slot>
      <Slot>
        <Svg s={16}><rect width="16" height="16" rx="3" fill="#b30b00" /><path d="M3.500 12.500c2-.5 5-4 5-8.500 0-1.500-1.300-1.500-1.200 0C7.500 7 10 10.500 12.500 10.500c1.500 0 1.200-1.300-.5-1.300-3 0-6.500 1-8.200 2.200-1 .8-.8 1.400-.3 1.100z" stroke="#fff" strokeWidth="1" /></Svg>
      </Slot>
      <Slot>
        <Svg s={16}><path d="M3.500 14a3.500 3.500 0 0 1-.5-7 5 5 0 0 1 9-2.500 4.500 4.500 0 0 1 1 9.500z" fill="#fff" stroke="#f3b9a6" /><path d="M5.500 6.500h5.500v5H5.500zM7.500 6.500v3h2" stroke="#e3603c" strokeWidth="1.100" /></Svg>
      </Slot>
      <Slot>
        <Svg s={16}><path d="M0 1h16v11H0z" fill="#8fa6b3" /><path d="M1 2h14v9H1z" fill="#bfe3fb" /><path d="M6 12h4v2h2v1H4v-1h2z" fill="#7f98a6" /></Svg>
      </Slot>
      <Slot open>
        <Svg s={16}><ellipse cx="7.500" cy="6" rx="7" ry="4.800" transform="rotate(-20 7.500 6)" fill="#fff" stroke="#d6353b" strokeWidth="1.200" /><path d="M4 3l5 5M9 2L7 7" stroke="#777" /><path d="M7 9l8-1M10 6l1 9" stroke="#2b88c9" strokeWidth="1.300" /><circle cx="13.500" cy="10" r="1.700" stroke="#2b88c9" strokeWidth="1.300" /><circle cx="10.500" cy="14" r="1.700" stroke="#2b88c9" strokeWidth="1.300" /></Svg>
      </Slot>
      <Slot>
        <Svg s={16}><path d="M1 0h14v11H1z" fill="#d0e9fa" /><path d="M1.500.5h13v10h-13z" fill="#35a5ee" /><path d="M1.500.5h13l-13 8z" fill="#6cc3f7" /><path d="M6 11h4v1.500H6zM1 13.500h14V16H1z" fill="#c9d6df" /></Svg>
      </Slot>
      <Slot>
        <Svg s={16}><ellipse cx="7.500" cy="6.500" rx="6.500" ry="4.500" stroke="#a9adb3" strokeWidth="2.200" /><path d="M8 15V5h4q2.500 0 2.500 2.500T12 10H8M11.500 10l3 5" stroke="#2166c0" strokeWidth="2.200" /></Svg>
      </Slot>
      <Slot open>
        <Svg s={16}><path d="M1 1h5l1.500 2H15v4H1z" fill="#e0a21b" /><path d="M1 4h14v10H1z" fill="#ffd45e" /><path d="M3.500 15V9q0-1 1-1h7q1 0 1 1v6H10v-3.500H6V15z" fill="#3798de" /></Svg>
      </Slot>
      <Slot active>
        <Svg s={16}><path d="M9 0h5v16H9z" fill="#e09b13" /><path d="M5.500 4H10v12H5.500z" fill="#f5c430" /><path d="M2 8h5v8H2z" fill="#fbe07a" /></Svg>
      </Slot>
    </div>
    <div className="ml-[155px] flex h-[30px] items-center whitespace-nowrap">
      <Svg w={26} h={24} className="-mt-[1px]">
        <circle cx="14" cy="14" r="9.500" fill="#f09a22" />
        <path d="M5 7h10M2 11h14M6 15h14M0 18h18" stroke="#fbe3a0" strokeWidth="2.200" />
        <circle cx="18" cy="6" r="6" fill="#c42b1c" />
        <text x="18" y="9" textAnchor="middle" fontFamily="Open Sans" fontSize="8" fill="#fff">1</text>
      </Svg>
      <span className="ml-[6px] w-[38px] pt-[1px] text-[13.600px] tracking-[-0.2px]">26°C</span>
      <span className="w-[61px] pt-[1px] text-[13.500px]">Smoke</span>
      <Svg w={12} h={7}><path d="M.5 6.500L6 1l5.500 5.500" stroke="#fff" strokeWidth="1.200" /></Svg>
      <Svg w={16} h={11} className="ml-[10px]"><path d="M3.500 11a3.500 3.500 0 0 1 0-6.500 5 5 0 0 1 8.500-1 4 4 0 0 1 1 7.500z" fill="#f3f3f3" /><path d="M7 3.500c2 0 4 2 8 5.500-.5 1.500-1 2-2.500 2H3.500C2 11 1 10 .5 9z" fill="#bdbdbd" /></Svg>
      <Svg w={13} h={16} className="ml-[10px]"><path d="M1.500 5h6.500v6H1.500zM8 7.500L11.500 5v6L8 8.500M2 2q4-2 8 0M2 14q4 2 8 0" stroke="#fff" strokeWidth="1.200" /></Svg>
      <Svg w={16} h={12} className="ml-[9px]"><path d="M.5 4h2.500l3-3.500v11L3 8H.5zM8.500 4q1.500 2 0 4M10.500 2.500q2.700 3.500 0 7M12.500 1q4.500 5 0 10" stroke="#fff" strokeWidth="1.100" /></Svg>
      <Svg w={14} h={14} className="ml-[10px]"><path d="M1 13.500Q2 2 13.500 1.500M4 13.500Q5 5 13.500 4.500M7 13.500q0-6 6.500-6" stroke="#d8d8d8" strokeWidth="1.100" /><circle cx="11.500" cy="12" r="1.800" fill="#fff" /></Svg>
      <span className="ml-[9px] w-[36px] text-[11.800px] tracking-[-0.3px]">ENG</span>
      <span className="w-[44px] text-[11.800px] tracking-[-0.3px]">23:44</span>
      <Svg w={16} h={16} className="ml-[1px]"><path d="M0 0h16v13h-6l-2 3-2-3H0z" fill="#fff" /><path d="M3 4h10M3 6.500h10M3 9h7" stroke="#263a39" strokeWidth="1.200" /></Svg>
      <div className="ml-[19px] h-[30px] w-px bg-[#7d8a89]" />
    </div>
  </footer>
);

export default function App() {
  return (
    <div className="flex h-[900px] w-[1600px] flex-col overflow-hidden font-['Open_Sans',sans-serif]">
      <TitleBar />
      <Ribbon />
      <main className="flex h-[685px]">
        <LeftNav />
        <div className="flex w-[1489px] flex-col">
          <div className="flex h-[650px]">
            <ReportCanvas />
            <div className="w-[12px] bg-white pl-[2px]">
              <div className="h-[579px] w-[8px] rounded-full bg-[#c6c6c6]" />
            </div>
            <div className="flex w-[33px] flex-col items-center border-l border-[#a8a6a4] bg-white pt-[13px]">
              <Collapse />
              <Svg w={12} h={13} className="mt-[15px] ml-[3px]">
                <path d="M11.500.8v11.400L6 8H.8V5H6z" stroke={INK} strokeWidth="1.200" />
              </Svg>
              <span className="mt-[8px] text-[14.300px] leading-[18px] font-semibold text-[#252423] [writing-mode:vertical-rl]">Filters</span>
            </div>
          </div>
          <PageTabs />
        </div>
        <SidePanes />
      </main>
      <StatusBar />
      <Taskbar />
    </div>
  );
}
